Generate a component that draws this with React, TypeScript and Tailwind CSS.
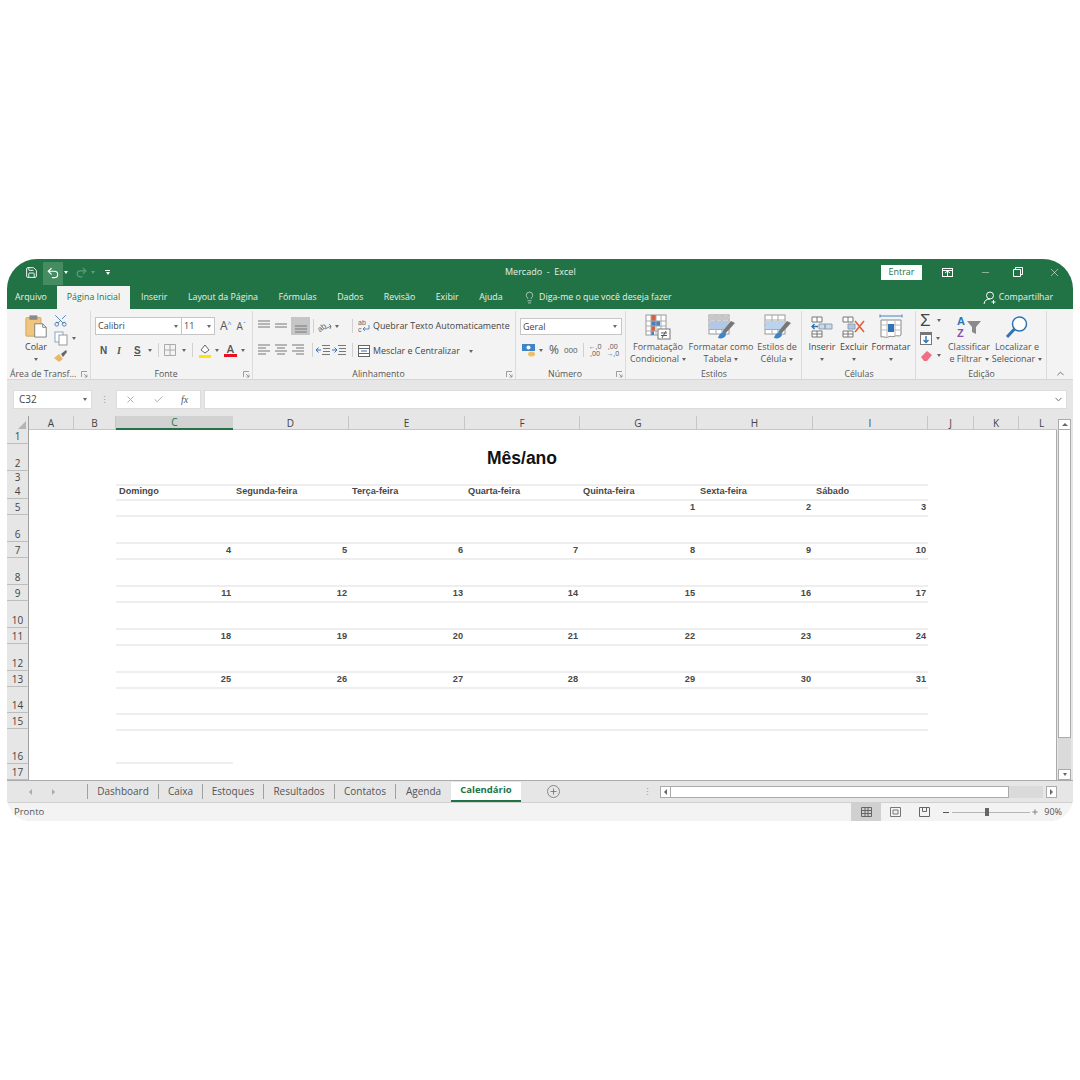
import React from 'react';
import { Save, Undo2, Redo2, Scissors, Lightbulb, X, Check, ChevronDown, ChevronUp, Plus, Minus } from 'lucide-react';

const ui = "font-['Open_Sans','Noto_Sans',sans-serif]";

function Caret({ className = '' }: { className?: string }) {
    return <span className={`inline-block w-0 h-0 border-x-[2.5px] border-x-transparent border-t-[3px] border-t-[#666] ${className}`} />;
}

function Launcher() {
    return (
        <svg width="7" height="7" viewBox="0 0 7 7" className="shrink-0">
            <path d="M0.5 6V0.5H6M3 3l3 3M6 3.5V6H3.5" fill="none" stroke="#888" strokeWidth="0.8" />
        </svg>
    );
}

function Lines({ kind }: { kind: 'left' | 'center' | 'right' | 'top' | 'middle' | 'bottom' }) {
    const rows: Record<string, string> = {
        left: 'M1 2h12M1 5h8M1 8h12M1 11h8',
        center: 'M1 2h12M3 5h8M1 8h12M3 11h8',
        right: 'M1 2h12M5 5h8M1 8h12M5 11h8',
        top: 'M1 2h12M1 5h12M1 8h12',
        middle: 'M1 5h12M1 8h12',
        bottom: 'M1 7h12M1 10h12M1 13h12',
    };
    return (
        <svg width="14" height="14" viewBox="0 0 14 14">
            <path d={rows[kind]} fill="none" stroke="#777" strokeWidth="1" />
        </svg>
    );
}

function Group({ label, launcher, width, children }: { label: string; launcher?: boolean; width: string; children: React.ReactNode }) {
    return (
        <div className={`${width} h-full shrink-0 flex flex-col border-r border-[#dcdcdc]`}>
            <div className="h-[58px] shrink-0 flex">{children}</div>
            <div className="h-[10px] shrink-0 flex items-center justify-between pl-[3px] pr-[2px] text-[8.75px] leading-[10px] text-[#555]">
                <span className={`flex-1 text-center whitespace-nowrap ${launcher ? 'mr-[5px]' : ''}`}>{label}</span>
                {launcher && <Launcher />}
            </div>
        </div>
    );
}

function BigButton({ width, lines, children }: { width: string; lines: [string, string]; children: React.ReactNode }) {
    return (
        <div className={`${width} flex flex-col items-center shrink-0`}>
            <div className="h-[28px] flex items-center justify-center">{children}</div>
            <div className="text-[9px] leading-[12px] text-[#555] text-center whitespace-nowrap">
                <div>{lines[0]}</div>
                <div className="flex items-center justify-center gap-[3px] h-[12px]">
                    {lines[1]}
                    <Caret />
                </div>
            </div>
        </div>
    );
}

function GridIcon({ color, flash }: { color: string; flash?: boolean }) {
    return (
        <svg width="30" height="26" viewBox="0 0 30 26">
            <rect x="3" y="1" width="20" height="19" fill="#fff" stroke="#999" />
            <path d="M3 6h20M3 11h20M3 15.5h20M10 1v19M16 1v19" stroke="#aaa" fill="none" />
            <rect x="4" y="7" width="18" height="8" fill={color} />
            {flash && <rect x="4" y="2" width="18" height="4" fill="#c7c7c7" />}
            <path d="M29 9L19 20l-3-2 9-11z" fill="#777" />
            <path d="M12 24c1-4 4-6 7-6l1 3c-1 3-5 4-8 3z" fill="#3f85c6" />
        </svg>
    );
}

function ClipboardIcon() {
    return (
        <svg width="23" height="24" viewBox="0 0 26 27">
            <rect x="1" y="4" width="17" height="21" rx="1" fill="#f1c67c" stroke="#c9a35f" />
            <rect x="5" y="1.5" width="9" height="5" fill="#8a8a8a" />
            <path d="M11 11h9l4 4v11H11z" fill="#fff" stroke="#777" />
            <path d="M20 11v4h4" fill="none" stroke="#777" />
        </svg>
    );
}

const columns = ['A', 'B', 'C', 'D', 'E', 'F', 'G', 'H', 'I', 'J', 'K', 'L'];
const gridCols = 'grid grid-cols-[22px_45px_42px_117px_116px_116px_115px_117px_116px_115px_46px_45px_38px]';

const rowHeights: Record<number, string> = {
    1: 'h-[14px]', 2: 'h-[27px]', 3: 'h-[13px]', 4: 'h-[15px]', 5: 'h-[16px]', 6: 'h-[27px]', 7: 'h-[16px]', 8: 'h-[27px]', 9: 'h-[16px]',
    10: 'h-[27px]', 11: 'h-[16px]', 12: 'h-[27px]', 13: 'h-[16px]', 14: 'h-[26px]', 15: 'h-[16px]', 16: 'h-[35px]', 17: 'h-[16px]',
};

const weekdays = ['Domingo', 'Segunda-feira', 'Terça-feira', 'Quarta-feira', 'Quinta-feira', 'Sexta-feira', 'Sábado'];
const weeks: Record<number, (number | null)[]> = {
    5: [null, null, null, null, 1, 2, 3],
    7: [4, 5, 6, 7, 8, 9, 10],
    9: [11, 12, 13, 14, 15, 16, 17],
    11: [18, 19, 20, 21, 22, 23, 24],
    13: [25, 26, 27, 28, 29, 30, 31],
};

function SheetRow({ row }: { row: number }) {
    const ruled = row >= 4 && row <= 16;
    return (
        <div className={`${gridCols} ${rowHeights[row]} w-[1050px] overflow-hidden`}>
            <div className="bg-[#e6e6e6] border-b border-[#bdbdbd] border-r border-r-[#9f9f9f] flex items-end justify-center text-[10px] leading-[13px] text-[#444]">
                {row}
            </div>
            <div />
            <div />
            {row === 2 ? (
                <div className="col-span-7 flex items-center justify-center pt-[2px] font-['Liberation_Sans',sans-serif] font-bold text-[17.5px] leading-none text-[#111]">
                    Mês/ano
                </div>
            ) : (
                [0, 1, 2, 3, 4, 5, 6].map((i) => (
                    <div
                        key={i}
                        className={`font-['Liberation_Sans',sans-serif] font-bold text-[9.2px] leading-none text-[#484848] flex items-center pb-[1px] ${
                            row === 4 ? 'justify-start pl-[3px]' : 'justify-end pr-[2px]'
                        } ${ruled ? 'border-t-2 border-[#eeeeee]' : ''} ${row === 16 && i === 0 ? 'border-b-2' : ''}`}
                    >
                        {row === 4 ? weekdays[i] : weeks[row]?.[i]}
                    </div>
                ))
            )}
            <div />
            <div />
            <div />
        </div>
    );
}

export default function App() {
    return (
        <div className={`w-[1080px] h-[1080px] bg-white pt-[259px] pl-[7px] ${ui}`}>
            <div className="w-[1066px] h-[562px] rounded-t-[30px] rounded-b-[24px] overflow-hidden flex flex-col bg-[#e6e6e6]">
                {/* title bar */}
                <div className="h-[26px] bg-[#217346] flex items-center text-white shrink-0">
                    <div className="w-[498px] shrink-0 flex items-center pl-[18px]">
                        <Save size={13} strokeWidth={1.7} />
                        <div className="ml-[5px] w-[20px] h-[23px] mt-[2px] bg-[#458c63] flex items-center justify-center">
                            <Undo2 size={14} strokeWidth={2} />
                        </div>
                        <Caret className="ml-[1px] !border-t-white" />
                        <Redo2 size={13} className="ml-[7px] text-[#5f9d7b]" />
                        <Caret className="ml-[3px] !border-t-[#5f9d7b]" />
                        <span className="ml-[10px] flex flex-col items-center gap-[1px]">
                            <span className="w-[5px] h-px bg-white" />
                            <Caret className="!border-t-white" />
                        </span>
                    </div>
                    <div className="w-[70px] shrink-0 text-center text-[9px] text-[#e6f0ea] whitespace-pre">Mercado  -  Excel</div>
                    <div className="flex-1 flex items-center justify-end">
                        <div className="w-[41px] h-[15px] bg-white text-[#217346] text-[9px] flex items-center justify-center">Entrar</div>
                        <svg width="11" height="9" viewBox="0 0 11 9" className="ml-[20px]">
                            <rect x="0.5" y="0.5" width="10" height="8" fill="none" stroke="#fff" />
                            <path d="M0.5 2.5h10M5.5 3v5M3 5l2.5-2L8 5" fill="none" stroke="#fff" />
                        </svg>
                        <Minus size={11} strokeWidth={1} className="ml-[27px]" />
                        <svg width="10" height="10" viewBox="0 0 10 10" className="ml-[22px]">
                            <path d="M2.5 2.5V.5h7v7h-2M.5 2.5h7v7h-7z" fill="none" stroke="#fff" />
                        </svg>
                        <X size={13} strokeWidth={1} className="ml-[25px] mr-[12px]" />
                    </div>
                </div>
                {/* ribbon tabs */}
                <div className="h-[24px] bg-[#217346] flex items-end text-[8.8px] text-[#e8f1ec] shrink-0">
                    <div className="h-[23px] flex items-center pl-[8px] w-[50px]">Arquivo</div>
                    <div className="h-[23px] w-[73px] bg-[#f3f3f3] text-[#217346] flex items-center justify-center">Página Inicial</div>
                    <div className="h-[23px] flex items-center gap-[20.5px] pl-[11px]">
                        <span>Inserir</span>
                        <span>Layout da Página</span>
                        <span>Fórmulas</span>
                        <span>Dados</span>
                        <span>Revisão</span>
                        <span>Exibir</span>
                        <span>Ajuda</span>
                        <span className="flex items-center gap-[3px]">
                            <Lightbulb size={13} strokeWidth={1.2} />
                            Diga-me o que você deseja fazer
                        </span>
                    </div>
                    <div className="flex-1 h-[23px] flex items-center justify-end pr-[20px] gap-[2px]">
                        <svg width="14" height="14" viewBox="0 0 14 14">
                            <circle cx="7" cy="4.5" r="3.5" fill="none" stroke="#fff" />
                            <path d="M1 13c.5-3.5 2.5-5 6-5M10.5 9v4M8.5 11h4" fill="none" stroke="#fff" />
                        </svg>
                        Compartilhar
                    </div>
                </div>
                {/* ribbon */}
                <div className="h-[71px] bg-[#f3f3f3] border-b border-[#d6d6d6] flex shrink-0 pt-[2px]">
                    <Group label="Área de Transf..." launcher width="w-[84px]">
                        <div className="w-[43px] pl-[15px] pt-[3px] flex flex-col items-center text-[9px] text-[#444]">
                            <ClipboardIcon />
                            <span className="mt-[2px] leading-[13px]">Colar</span>
                            <Caret className="mt-[5px]" />
                        </div>
                        <div className="flex flex-col items-start pl-[3px] pt-[2px] gap-[3px]">
                            <Scissors size={15} className="text-[#3f6fa8] -rotate-90" strokeWidth={1.3} />
                            <span className="flex items-center gap-[4px] ml-[1px]">
                                <svg width="14" height="15" viewBox="0 0 14 15">
                                    <rect x="1" y="1" width="8" height="10" fill="#fff" stroke="#8aa6c7" />
                                    <rect x="5" y="4" width="8" height="10" fill="#fff" stroke="#999" />
                                </svg>
                                <Caret />
                            </span>
                            <svg width="15" height="14" viewBox="0 0 15 14">
                                <path d="M1 9l5-4 4 5-4 3z" fill="#e8b76a" />
                                <path d="M8 5l5-4 1 2-4 5z" fill="#666" />
                            </svg>
                        </div>
                    </Group>
                    <Group label="Fonte" launcher width="w-[162px]">
                        <div className="flex flex-col pl-[4px] pt-[6px]">
                            <div className="flex items-center">
                                <div className="w-[87px] h-[18px] bg-white border border-[#c6c6c6] text-[9px] text-[#444] flex items-center justify-between px-[2px] pr-[3px]">
                                    Calibri
                                    <Caret />
                                </div>
                                <div className="w-[33px] h-[18px] bg-white border border-l-0 border-[#c6c6c6] text-[9px] text-[#444] flex items-center justify-between px-[2px] pr-[3px]">
                                    11
                                    <Caret />
                                </div>
                                <span className="ml-[5px] text-[12px] text-[#555] leading-none">A<sup className="text-[#3f85c6] text-[7px]">^</sup></span>
                                <span className="ml-[5px] text-[10px] text-[#555] leading-none">A<sup className="text-[#3f85c6] text-[7px]">ˇ</sup></span>
                            </div>
                            <div className="flex items-center mt-[6px] h-[18px] text-[#555]">
                                <span className="ml-[5px] w-[9px] text-[10px] font-bold font-['Liberation_Sans',sans-serif]">N</span>
                                <span className="ml-[8px] w-[8px] text-[10px] italic font-['Liberation_Serif',serif] font-bold">I</span>
                                <span className="ml-[9px] w-[8px] text-[10px] font-bold underline font-['Liberation_Sans',sans-serif]">S</span>
                                <Caret className="ml-[6px]" />
                                <span className="ml-[6px] w-px h-[14px] bg-[#d0d0d0]" />
                                <svg width="12" height="12" viewBox="0 0 12 12" className="ml-[5px]">
                                    <path d="M.5.5h11v11H.5zM6 .5v11M.5 6h11" fill="none" stroke="#aaa" />
                                </svg>
                                <Caret className="ml-[6px]" />
                                <span className="ml-[6px] w-px h-[14px] bg-[#d0d0d0]" />
                                <svg width="14" height="16" viewBox="0 0 14 16" className="ml-[5px]">
                                    <path d="M3 8l4-5 4 5-4 3z" fill="#fff" stroke="#666" />
                                    <rect x="1" y="13" width="12" height="3" fill="#ffe600" />
                                </svg>
                                <Caret className="ml-[3px]" />
                                <span className="ml-[5px] w-[13px] flex flex-col items-center text-[11px] leading-[11px] font-semibold text-[#555]">
                                    A
                                    <span className="w-[13px] h-[3px] bg-[#e81123]" />
                                </span>
                                <Caret className="ml-[4px]" />
                            </div>
                        </div>
                    </Group>
                    <Group label="Alinhamento" launcher width="w-[263px]">
                        <div className="w-[100px] shrink-0 flex flex-col pl-[4px] pt-[6px]">
                            <div className="flex items-center h-[18px] gap-[3px]">
                                <Lines kind="top" />
                                <Lines kind="middle" />
                                <span className="w-[19px] h-[18px] bg-[#c6c6c6] flex items-center justify-center"><Lines kind="bottom" /></span>
                                <span className="w-px h-[14px] bg-[#d0d0d0]" />
                                <svg width="15" height="14" viewBox="0 0 15 14">
                                    <text x="0" y="11" fontSize="8" fill="#666" transform="rotate(-40 5 8)" fontFamily="Liberation Sans">ab</text>
                                    <path d="M8 10l6-3M12 5l2 2-1 3" fill="none" stroke="#666" strokeWidth="0.8" />
                                </svg>
                                <Caret />
                                <span className="ml-[10px] w-px h-[14px] bg-[#d0d0d0]" />
                            </div>
                            <div className="flex items-center h-[18px] mt-[6px] gap-[3px]">
                                <Lines kind="left" />
                                <Lines kind="center" />
                                <Lines kind="right" />
                                <span className="ml-[4px] w-px h-[14px] bg-[#d0d0d0]" />
                                <svg width="14" height="12" viewBox="0 0 14 12">
                                    <path d="M6 1.5h8M7 4.5h7M7 7.5h7M6 10.5h8" stroke="#777" fill="none" />
                                    <path d="M5 6H0M2.5 3.5L0 6l2.5 2.5" stroke="#2f75b5" fill="none" />
                                </svg>
                                <svg width="14" height="12" viewBox="0 0 14 12" className="ml-[-1px]">
                                    <path d="M6 1.5h8M7 4.5h7M7 7.5h7M6 10.5h8" stroke="#777" fill="none" />
                                    <path d="M0 6h5M2.5 3.5L5 6 2.5 8.5" stroke="#2f75b5" fill="none" />
                                </svg>
                                <span className="ml-[3px] w-px h-[14px] bg-[#d0d0d0]" />
                            </div>
                        </div>
                        <div className="flex flex-col pl-[5px] pt-[6px] text-[8.9px] text-[#444] whitespace-nowrap">
                            <div className="flex items-center h-[18px] gap-[3px]">
                                <svg width="12" height="14" viewBox="0 0 12 14">
                                    <text x="0" y="6" fontSize="7" fill="#666" fontFamily="Liberation Sans">ab</text>
                                    <text x="0" y="13" fontSize="7" fill="#666" fontFamily="Liberation Sans">c</text>
                                    <path d="M11 6v4H5M7 8l-2 2 2 2" fill="none" stroke="#2f75b5" strokeWidth="0.8" />
                                </svg>
                                Quebrar Texto Automaticamente
                            </div>
                            <div className="flex items-center h-[18px] mt-[7px] gap-[3px]">
                                <svg width="12" height="12" viewBox="0 0 12 12">
                                    <rect x=".5" y=".5" width="11" height="11" fill="#fff" stroke="#666" />
                                    <path d="M.5 3.5h11M.5 8.5h11" stroke="#666" />
                                    <path d="M3 6h6" stroke="#2f75b5" />
                                </svg>
                                Mesclar e Centralizar
                                <Caret className="ml-[6px]" />
                            </div>
                        </div>
                    </Group>
                    <Group label="Número" launcher width="w-[110px]">
                        <div className="flex flex-col pl-[4px] pt-[7px] text-[#555]">
                            <div className="w-[102px] h-[17px] bg-white border border-[#c6c6c6] text-[9px] text-[#444] flex items-center justify-between px-[2px] pr-[4px]">
                                Geral
                                <Caret />
                            </div>
                            <div className="flex items-center h-[18px] mt-[6px]">
                                <svg width="14" height="13" viewBox="0 0 14 13" className="ml-[2px]">
                                    <rect x="0" y="0" width="13" height="7" fill="#3f85c6" />
                                    <circle cx="6.5" cy="3.5" r="2" fill="#fff" />
                                    <ellipse cx="9.5" cy="10" rx="3.5" ry="2.5" fill="#f0c060" />
                                </svg>
                                <Caret className="ml-[3px]" />
                                <span className="ml-[6px] text-[12px] leading-none">%</span>
                                <span className="ml-[5px] text-[8px] leading-none">000</span>
                                <span className="ml-[5px] w-px h-[14px] bg-[#d0d0d0]" />
                                <span className="ml-[5px] text-[7px] leading-[7px] text-center">
                                    <span className="text-[#2f75b5]">←</span>,0<br />,00
                                </span>
                                <span className="ml-[5px] text-[7px] leading-[7px] text-center">
                                    ,00<br /><span className="text-[#2f75b5]">→</span>,0
                                </span>
                            </div>
                        </div>
                    </Group>
                    <Group label="Estilos" width="w-[176px]">
                        <div className="flex pt-[2px] pl-[2px]">
                            <BigButton width="w-[60px]" lines={['Formatação', 'Condicional']}>
                                <svg width="26" height="26" viewBox="0 0 26 26">
                                    <rect x="1" y="1" width="20" height="20" fill="#fff" stroke="#999" />
                                    <rect x="6" y="1" width="5" height="6" fill="#d9603f" />
                                    <rect x="6" y="7" width="9" height="5" fill="#3f85c6" />
                                    <rect x="6" y="12" width="4" height="5" fill="#d9603f" />
                                    <rect x="6" y="17" width="3" height="4" fill="#3f85c6" />
                                    <path d="M1 7h20M1 12h20M1 17h20M6 1v20M11 1v20M16 1v20" stroke="#aaa" fill="none" />
                                    <rect x="13" y="15" width="12" height="10" fill="#fff" stroke="#777" />
                                    <path d="M16 19h6M16 21.5h6M21 17l-4 7" stroke="#555" />
                                </svg>
                            </BigButton>
                            <BigButton width="w-[66px]" lines={['Formatar como', 'Tabela']}>
                                <GridIcon color="#b3c7e6" flash />
                            </BigButton>
                            <BigButton width="w-[46px]" lines={['Estilos de', 'Célula']}>
                                <GridIcon color="#bcd3ee" />
                            </BigButton>
                        </div>
                    </Group>
                    <Group label="Células" width="w-[114px]">
                        <div className="flex pt-[2px] pl-[2px] text-[9px] text-[#444]">
                            {[
                                { name: 'Inserir', w: 'w-[36px]', icon: (
                                    <svg width="22" height="22" viewBox="0 0 22 22">
                                        <path d="M1 1h10v5H1zM6 1v5M1 15h10v6H1zM6 15v6M1 18h10" fill="#fff" stroke="#777" />
                                        <path d="M8 8h6v5H8zM14 8h7v5h-7z" fill="#cfd8e6" stroke="#8aa0bd" />
                                        <path d="M7 10.5H1M3.5 8L1 10.5 3.5 13" fill="none" stroke="#2f75b5" strokeWidth="1.4" />
                                    </svg>
                                ) },
                                { name: 'Excluir', w: 'w-[28px]', icon: (
                                    <svg width="24" height="22" viewBox="0 0 24 22">
                                        <path d="M1 1h10v5H1zM6 1v5M1 15h10v6H1zM6 15v6M1 18h10" fill="#fff" stroke="#777" />
                                        <path d="M6 8h7v5H6z" fill="#b6c6dd" stroke="#8aa0bd" />
                                        <path d="M13 5l9 11M22 5l-9 11" stroke="#e2603f" strokeWidth="1.6" />
                                    </svg>
                                ) },
                                { name: 'Formatar', w: 'w-[46px]', icon: (
                                    <svg width="24" height="26" viewBox="0 0 24 26">
                                        <path d="M1 2h22M1 .5v3M23 .5v3" stroke="#3f85c6" fill="none" />
                                        <path d="M2 6h20v15c-2 2-4 0-6 1-3 2-4-1-7 1-3 1-5-1-7 0z" fill="#fff" stroke="#888" />
                                        <path d="M2 11h20M2 16h20M8 6v16M16 6v16" stroke="#bbb" fill="none" />
                                        <rect x="9" y="10" width="6" height="8" fill="#2f75b5" />
                                    </svg>
                                ) },
                            ].map((b) => (
                                <div key={b.name} className={`${b.w} flex flex-col items-center`}>
                                    <div className="h-[28px] flex items-center justify-center">{b.icon}</div>
                                    <span className="leading-[12px]">{b.name}</span>
                                    <Caret className="mt-[5px]" />
                                </div>
                            ))}
                        </div>
                    </Group>
                    <Group label="Edição" width="w-[131px]">
                        <div className="flex flex-col pl-[4px] pt-[1px] gap-[2px] w-[30px] shrink-0">
                            <span className="flex items-center gap-[4px] h-[17px]">
                                <span className="text-[17px] leading-none text-[#444] w-[13px] font-['Liberation_Sans',sans-serif]">Σ</span>
                                <Caret />
                            </span>
                            <span className="flex items-center gap-[4px] h-[15px]">
                                <svg width="12" height="13" viewBox="0 0 12 13">
                                    <rect x=".5" y=".5" width="11" height="12" fill="#fff" stroke="#777" />
                                    <rect x="0" y="0" width="12" height="3" fill="#777" />
                                    <path d="M6 4v6M3.5 8L6 10.5 8.5 8" stroke="#2f75b5" fill="none" strokeWidth="1.4" />
                                </svg>
                                <Caret />
                            </span>
                            <span className="flex items-center gap-[4px] h-[15px]">
                                <svg width="13" height="11" viewBox="0 0 13 11">
                                    <path d="M1 7l6-6 5 4-5 6H4z" fill="#ef6f85" />
                                </svg>
                                <Caret />
                            </span>
                        </div>
                        <div className="flex pt-[2px]">
                            <BigButton width="w-[46px]" lines={['Classificar', 'e Filtrar']}>
                                <svg width="26" height="26" viewBox="0 0 26 26">
                                    <text x="1" y="11" fontSize="11" fontWeight="700" fill="#2f75b5" fontFamily="Liberation Sans">A</text>
                                    <text x="1" y="23" fontSize="11" fontWeight="700" fill="#8a4fb5" fontFamily="Liberation Sans">Z</text>
                                    <path d="M11 7h14l-5 6v7l-4-2v-5z" fill="#8a8a8a" />
                                </svg>
                            </BigButton>
                            <BigButton width="w-[50px]" lines={['Localizar e', 'Selecionar']}>
                                <svg width="24" height="24" viewBox="0 0 24 24">
                                    <circle cx="14.5" cy="9" r="7" fill="#fff" stroke="#2f75b5" strokeWidth="1.5" />
                                    <path d="M9.5 14L2 22" stroke="#2f75b5" strokeWidth="3" />
                                </svg>
                            </BigButton>
                        </div>
                    </Group>
                    <div className="flex-1 flex items-end justify-center">
                        <ChevronUp size={11} className="text-[#666]" />
                    </div>
                </div>
                {/* formula bar */}
                <div className="h-[36px] flex items-start pt-[10px] pl-[6px] pr-[6px] shrink-0">
                    <div className="w-[79px] h-[19px] bg-white border border-[#dcdcdc] flex items-center justify-between pl-[5px] pr-[4px] text-[10px] text-[#444]">
                        C32
                        <Caret />
                    </div>
                    <span className="w-[24px] h-[19px] flex items-center justify-center text-[#999] text-[9px] leading-none">⋮</span>
                    <div className="w-[85px] h-[19px] bg-white border border-[#dcdcdc] flex items-center pl-[8px] gap-[17px] text-[#aaa]">
                        <X size={11} />
                        <Check size={11} />
                        <span className="font-['Liberation_Serif',serif] italic text-[10px] text-[#555]">fx</span>
                    </div>
                    <div className="ml-[3px] flex-1 h-[19px] bg-white border border-[#dcdcdc] flex items-center justify-end pr-[2px]">
                        <ChevronDown size={11} className="text-[#666]" />
                    </div>
                </div>
                {/* column headers + sheet + vertical scrollbar */}
                <div className="flex shrink-0 h-[365px] border-b border-[#ababab]">
                    <div className="w-[1050px] flex flex-col">
                        <div className={`${gridCols} h-[14px] shrink-0 w-[1050px] text-[10px] text-[#444]`}>
                            <div className="flex items-end justify-end border-r border-[#9f9f9f]">
                                <span className="w-0 h-0 border-l-[8px] border-l-transparent border-b-[8px] border-b-[#b5b5b5] mr-[2px] mb-[1px]" />
                            </div>
                            {columns.map((c) => (
                                <div
                                    key={c}
                                    className={`flex items-center justify-center leading-none ${
                                        c === 'C'
                                            ? 'bg-[#d2d2d2] border-b-2 border-[#217346] text-[#217346]'
                                            : c === 'L'
                                              ? 'border-b border-[#c6c6c6] pl-[7px]'
                                              : 'border-r border-b border-[#c6c6c6]'
                                    }`}
                                >
                                    {c}
                                </div>
                            ))}
                        </div>
                        <div className="flex-1 bg-white overflow-hidden border-r border-[#ababab]">
                            {Array.from({ length: 17 }, (_, i) => (
                                <SheetRow key={i} row={i + 1} />
                            ))}
                        </div>
                    </div>
                    <div className="w-[16px] h-full flex flex-col pt-[3px] pl-[1px] pr-[2px]">
                        <div className="h-[11px] bg-white border border-[#ababab] flex items-center justify-center">
                            <span className="w-0 h-0 border-x-[3px] border-x-transparent border-b-[3px] border-b-[#666]" />
                        </div>
                        <div className="h-[308px] bg-white border-x border-b border-[#ababab]" />
                        <div className="flex-1 bg-[#dadada]" />
                        <div className="h-[11px] bg-white border border-[#ababab] flex items-center justify-center">
                            <Caret />
                        </div>
                    </div>
                </div>
                {/* sheet tabs */}
                <div className="h-[22px] bg-[#e6e6e6] flex items-center text-[10px] text-[#555] shrink-0 border-b border-[#d0d0d0]">
                    <div className="w-[80px] flex items-center pl-[22px] gap-[20px] text-[#aaa]">
                        <span className="w-0 h-0 border-y-[3px] border-y-transparent border-r-[3px] border-r-[#aaa]" />
                        <span className="w-0 h-0 border-y-[3px] border-y-transparent border-l-[3px] border-l-[#aaa]" />
                    </div>
                    {[
                        { name: 'Dashboard', w: 'w-[71px]' },
                        { name: 'Caixa', w: 'w-[44px]' },
                        { name: 'Estoques', w: 'w-[61px]' },
                        { name: 'Resultados', w: 'w-[71px]' },
                        { name: 'Contatos', w: 'w-[61px]' },
                        { name: 'Agenda', w: 'w-[56px]' },
                    ].map((t) => (
                        <div key={t.name} className={`${t.w} h-[15px] border-l border-[#a0a0a0] flex items-center justify-center`}>
                            {t.name}
                        </div>
                    ))}
                    <div className="w-[70px] h-[20px] bg-white border-b-2 border-[#217346] text-[#217346] text-[9.5px] font-bold flex items-center justify-center">
                        Calendário
                    </div>
                    <div className="w-[13px] h-[13px] ml-[26px] rounded-full border border-[#888] flex items-center justify-center">
                        <Plus size={9} className="text-[#666]" />
                    </div>
                    <span className="ml-[81px] w-[13px] text-center text-[#999] text-[9px] leading-none">⋮</span>
                    <div className="ml-[6px] w-[397px] h-[12px] flex items-stretch">
                        <div className="w-[11px] bg-white border border-[#ababab] flex items-center justify-center">
                            <span className="w-0 h-0 border-y-[3px] border-y-transparent border-r-[3px] border-r-[#666]" />
                        </div>
                        <div className="w-[338px] bg-white border-y border-r border-[#ababab]" />
                        <div className="w-[34px] bg-[#dadada]" />
                        <div className="ml-auto w-[11px] bg-white border border-[#ababab] flex items-center justify-center">
                            <span className="w-0 h-0 border-y-[3px] border-y-transparent border-l-[3px] border-l-[#666]" />
                        </div>
                    </div>
                </div>
                {/* status bar */}
                <div className="flex-1 bg-[#f3f3f3] flex items-center text-[9.5px] text-[#555]">
                    <span className="pl-[7px]">Pronto</span>
                    <div className="ml-auto flex items-center h-full">
                        <div className="w-[30px] h-full bg-[#d0d0d0] flex items-center justify-center">
                            <svg width="11" height="10" viewBox="0 0 11 10">
                                <path d="M.5.5h10v9H.5zM.5 3.5h10M.5 6.5h10M4 .5v9M7 .5v9" fill="none" stroke="#666" />
                            </svg>
                        </div>
                        <div className="w-[29px] flex items-center justify-center">
                            <svg width="11" height="10" viewBox="0 0 11 10">
                                <path d="M.5.5h10v9H.5zM3 3h5v4H3z" fill="none" stroke="#777" />
                            </svg>
                        </div>
                        <div className="w-[29px] flex items-center justify-center">
                            <svg width="11" height="10" viewBox="0 0 11 10">
                                <path d="M.5.5h10v9H.5zM3.5.5v4h4v-4" fill="none" stroke="#666" />
                            </svg>
                        </div>
                        <span className="ml-[4px] w-[6px] h-px bg-[#555]" />
                        <div className="ml-[3px] w-[78px] h-px bg-[#b5b5b5] flex items-center pl-[33px]">
                            <span className="w-[4px] h-[8px] bg-[#666]" />
                        </div>
                        <Plus size={8} className="ml-[1px] text-[#555]" />
                        <span className="ml-[5px] mr-[11px] text-[9px]">90%</span>
                    </div>
                </div>
            </div>
        </div>
    );
}
